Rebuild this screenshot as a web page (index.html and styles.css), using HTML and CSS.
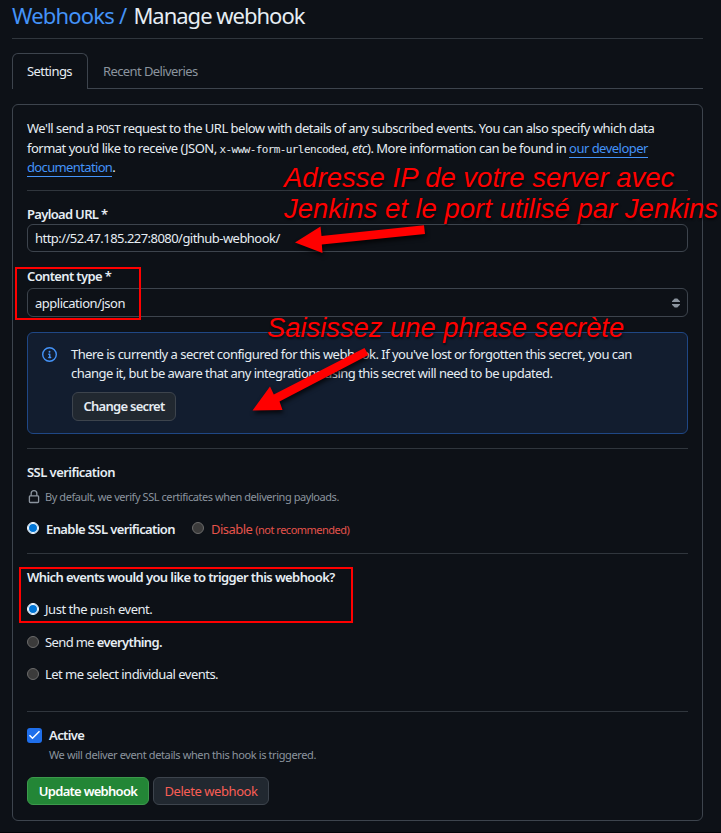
FILE: index.html
```html
<!DOCTYPE html>
<html lang="en">
<head>
<meta charset="utf-8">
<title>Manage webhook</title>
<link rel="stylesheet" href="styles.css">
</head>
<body>
<main class="page">
  <h1 class="title"><a class="crumb">Webhooks /</a><span class="page-name">Manage webhook</span></h1>
  <nav class="tabs">
    <a class="tab tab-active">Settings</a>
    <a class="tab">Recent Deliveries</a>
  </nav>
  <section class="box">
    <p class="intro">
      We'll send a <code>POST</code> request to the URL below with details of any subscribed events. You can also specify which data<br>
      format you'd like to receive (JSON, <code>x-www-form-urlencoded</code>, <em>etc</em>). More information can be found in <a class="link">our developer</a><br>
      <a class="link link-last">documentation</a>.
    </p>
    <hr>
    <label class="label">Payload URL *</label>
    <div class="input">http://52.47.185.227:8080/github-webhook/</div>
    <label class="label label-type">Content type *</label>
    <div class="input select"><span>application/json</span>
      <svg class="caret" width="8" height="10" viewBox="0 0 8 10"><path d="M0 4v-.8L2.700.5h2.600L8 3.200V4zM0 6h8v.8L5.300 9.500H2.700L0 6.800z"/></svg>
    </div>
    <div class="flash">
      <svg class="info" width="15" height="15" viewBox="0 0 16 16"><path d="M0 8a8 8 0 1 1 16 0A8 8 0 0 1 0 8Zm8-6.5a6.5 6.5 0 1 0 0 13 6.5 6.5 0 0 0 0-13ZM6.5 7.75A.75.75 0 0 1 7.25 7h1a.75.75 0 0 1 .75.75v2.75h.25a.75.75 0 0 1 0 1.5h-2a.75.75 0 0 1 0-1.5h.25v-2h-.25a.75.75 0 0 1-.75-.75ZM8 6a1 1 0 1 1 0-2 1 1 0 0 1 0 2Z"/></svg>
      <div class="flash-body">
        There is currently a secret configured for this webhook. If you've lost or forgotten this secret, you can<br>
        change it, but be aware that any integrations using this secret will need to be updated.
        <div class="btn btn-secret">Change secret</div>
      </div>
    </div>
    <hr class="after-flash">
    <div class="row heading heading-ssl">SSL verification</div>
    <div class="row note"><svg class="lock" width="14" height="14" viewBox="0 0 16 16"><path d="M4 4a4 4 0 0 1 8 0v2h.25c.966 0 1.75.784 1.75 1.75v5.5A1.75 1.75 0 0 1 12.25 15h-8.5A1.75 1.75 0 0 1 2 13.25v-5.5C2 6.784 2.784 6 3.75 6H4Zm8.25 3.5h-8.5a.25.25 0 0 0-.25.25v5.5c0 .138.112.25.25.25h8.5a.25.25 0 0 0 .25-.25v-5.5a.25.25 0 0 0-.25-.25ZM10.5 6V4a2.5 2.5 0 1 0-5 0v2Z"/></svg>By default, we verify SSL certificates when delivering payloads.</div>
    <div class="row ssl"><i class="radio on"></i><b class="ssl-on">Enable SSL verification</b><i class="radio second"></i><span class="red">Disable <small>(not recommended)</small></span></div>
    <hr class="after-row">
    <div class="row heading">Which events would you like to trigger this webhook?</div>
    <div class="row opt opt-push"><i class="radio on"></i><span>Just the <code>push</code> event.</span></div>
    <div class="row opt opt-all"><i class="radio"></i><span>Send me <b>everything.</b></span></div>
    <div class="row opt"><i class="radio"></i><span>Let me select individual events.</span></div>
    <hr class="after-events">
    <div class="row heading"><i class="check"><svg width="15" height="15" viewBox="0 0 15 15"><path d="M2.500 7.200l3 3 7-7"/></svg></i>Active</div>
    <div class="row note note-active">We will deliver event details when this hook is triggered.</div>
    <div class="actions">
      <div class="btn btn-primary">Update webhook</div>
      <div class="btn btn-danger">Delete webhook</div>
    </div>
  </section>
</main>
<div class="mark mark-type"></div>
<div class="mark mark-push"></div>
<svg class="arrows" width="721" height="833" viewBox="0 0 721 833"><path d="M295 242.500L320.500 226.500 321.500 236 424 225.200 425 234 321.800 244.500 322.500 253zM252.500 410.500L270 386.500 273.800 394.500 364.500 348 368.500 355 279.500 401.500 282.500 410z"/></svg>
<div class="callout callout-ip">Adresse IP de votre server avec<br>Jenkins et le port utilisé par Jenkins</div>
<div class="callout callout-secret">Saisissez une phrase secrète</div>
</body>
</html>
```
FILE: styles.css
```css
* { box-sizing: border-box; }
body {
  position: relative;
  width: 721px;
  height: 833px;
  margin: 0;
  overflow: hidden;
  border-bottom: 1px solid #010409;
  background: #0d1117;
  color: #e6edf3;
  font: 13px/20px "Noto Sans", sans-serif;
  letter-spacing: -.525px;
  white-space: nowrap;
}
.page { padding: 0 18px 0 12px; }
b { font-weight: 600; }
code { font: 11px "DejaVu Sans Mono", monospace; letter-spacing: -.6px; }

.title {
  display: flex;
  gap: 7px;
  height: 39px;
  margin: 0;
  border-bottom: 1px solid #30363d;
  font-size: 22px;
  font-weight: 400;
  line-height: 30px;
  letter-spacing: -.8px;
}
.page-name { letter-spacing: -1px; }
.crumb, .link { color: #4493f8; }
.link { border-bottom: 1px solid #4493f8; }
.link-last { letter-spacing: -.64px; }

.tabs { display: flex; height: 36px; margin-top: 14px; border-bottom: 1px solid #3d444d; }
.tab { height: 36px; padding: 8px 15px; color: #8b949e; letter-spacing: -.6px; }
.tab-active {
  width: 76px;
  padding: 7px 14px;
  border: 1px solid #3d444d;
  border-bottom: 0;
  border-radius: 6px 6px 0 0;
  background: #0d1117;
  color: #e6edf3;
  letter-spacing: -.56px;
}

.box { height: 717px; margin-top: 15px; padding: 14px 14px 0; border: 1px solid #3d444d; border-radius: 6px; }
.intro { height: 71px; margin: 0; line-height: 19.500px; letter-spacing: -.51px; }
hr { height: 1px; margin: 0; border: 0; background: #30363d; }
.label { display: block; height: 33px; padding-top: 13px; font-weight: 600; letter-spacing: -.68px; }
.label-type { height: 36px; padding-top: 14px; letter-spacing: -.64px; }
.input { height: 28px; padding: 4px 7px; border: 1px solid #3d444d; border-radius: 6px; line-height: 19px; letter-spacing: -.54px; }
.select { display: flex; justify-content: space-between; align-items: center; height: 29px; padding: 5px 7px 4px; letter-spacing: -.49px; }
.caret { fill: #8b949e; }

.flash { display: flex; height: 102px; margin-top: 15px; padding: 12px 14px; border: 1px solid #1f4785; border-radius: 6px; background: #121d2f; line-height: 19px; }
.info { flex: none; margin: 2px 14px 0 0; fill: #4493f8; }
.btn { display: flex; align-items: center; justify-content: center; height: 28px; border: 1px solid #3d444d; border-radius: 6px; background: #212830; }
.btn-secret { width: 104px; height: 29px; margin: 9px 0 0 1px; font-weight: 600; letter-spacing: -.72px; }
.after-flash { margin-top: 14px; }

.row { display: flex; align-items: center; height: 20px; }
.heading { margin-top: 13px; font-weight: 600; letter-spacing: -.6px; }
.heading-ssl { letter-spacing: -.55px; }
.note { margin-top: 5px; color: #8b949e; font-size: 11px; letter-spacing: -.434px; }
.lock { margin-right: 4px; fill: #8b949e; }
.ssl { margin-top: 12px; }
.ssl .radio { margin-top: -2px; }
.ssl-on { letter-spacing: -.595px; }
.opt { margin-top: 12px; }
.opt-push { letter-spacing: -.47px; }
.opt-push code { letter-spacing: -.4px; }
.opt-all { margin-top: 13px; letter-spacing: -.624px; }
.radio { width: 12px; height: 12px; margin-right: 6px; border: 1px solid #6b6b6b; border-radius: 50%; background: #3b3b3b; }
.radio.on { border-color: #fff; background: #0075d6; box-shadow: inset 0 0 0 1px #fff; }
.ssl .radio.on { margin-right: 7px; }
.ssl .second { margin-left: 17px; margin-right: 7px; }
.red { color: #e5534b; }
small { font-size: 11px; letter-spacing: -.5px; }
.after-row { margin-top: 14px; }
.after-events { margin-top: 27px; }
.check { display: flex; width: 15px; height: 15px; margin-right: 7px; border-radius: 3px; background: #1f6feb; }
.check path { fill: none; stroke: #fff; stroke-width: 1.500; }
.note-active { margin-top: 0; padding-left: 22px; letter-spacing: -.387px; }

.actions { display: flex; gap: 4px; margin-top: 12px; }
.btn-primary { width: 122px; border-color: #3c9a4c; background: #238636; color: #fff; font-weight: 600; letter-spacing: -.72px; }
.btn-danger { width: 116px; color: #fa5e55; letter-spacing: -.44px; }

.mark { position: absolute; border: 2px solid #f00; }
.mark-type { left: 15px; top: 267px; width: 126px; height: 53px; }
.mark-push { left: 19px; top: 567px; width: 334px; height: 56px; }
.callout { position: absolute; color: #f00; font: italic 27.500px/31px "Liberation Sans", sans-serif; letter-spacing: 0; text-shadow: 1px 2px 2px rgba(0, 0, 0, .6); }
.callout-ip { left: 284px; top: 162px; }
.callout-secret { left: 267px; top: 312px; font-size: 27.350px; }
.arrows { position: absolute; left: 0; top: 0; fill: #f00; filter: drop-shadow(1px 3px 2px rgba(0, 0, 0, .7)); }
```
